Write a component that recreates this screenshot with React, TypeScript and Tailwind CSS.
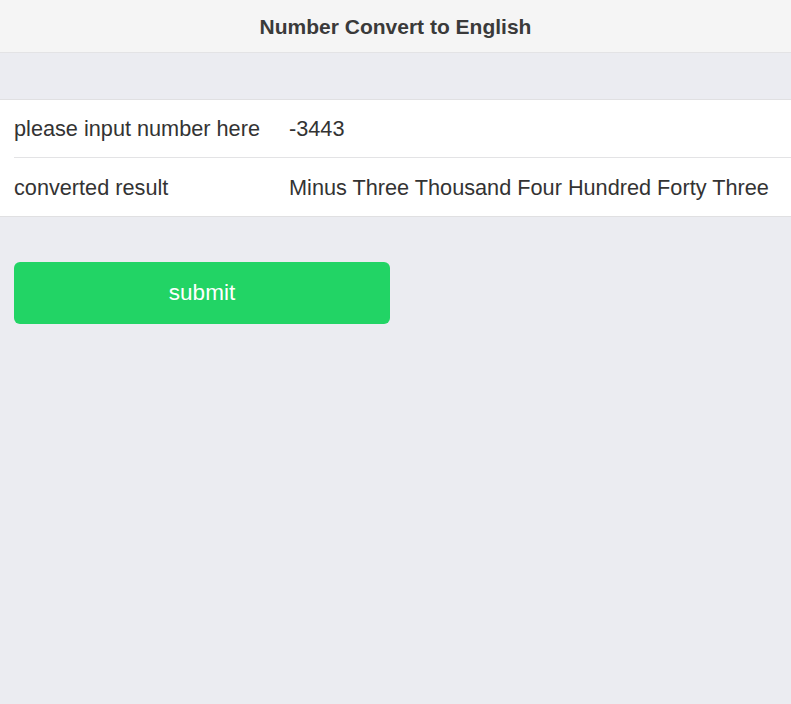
import React from "react";

const App = () => {
  return (
    <div className="min-h-[704px] w-full bg-[#ebecf1] font-['Liberation_Sans',Arial,sans-serif] text-[#333333]">
      <div className="flex h-[53px] items-center justify-center border-b border-[#e3e3e5] bg-[#f5f5f5] pt-[2px]">
        <div className="text-[21px] font-bold text-[#3a3a3a]">Number Convert to English</div>
      </div>
      <div className="mt-[46px] border-y border-[#e0e0e2] bg-white">
        <div className="flex h-[57px] items-center pl-[14px] pt-[2px] text-[21.7px]">
          <div className="w-[275px]">please input number here</div>
          <div>-3443</div>
        </div>
        <div className="ml-[14px] border-t border-[#e3e3e5]" />
        <div className="flex h-[58px] items-center pl-[14px] pt-[3px] text-[21.7px]">
          <div className="w-[275px]">converted result</div>
          <div>Minus Three Thousand Four Hundred Forty Three</div>
        </div>
      </div>
      <div className="px-[14px] pt-[45px]">
        <button className="flex h-[62px] w-[376px] items-center justify-center rounded-[6px] bg-[#22d465] text-[22.5px] text-white">
          submit
        </button>
      </div>
    </div>
  );
};

export default App;
